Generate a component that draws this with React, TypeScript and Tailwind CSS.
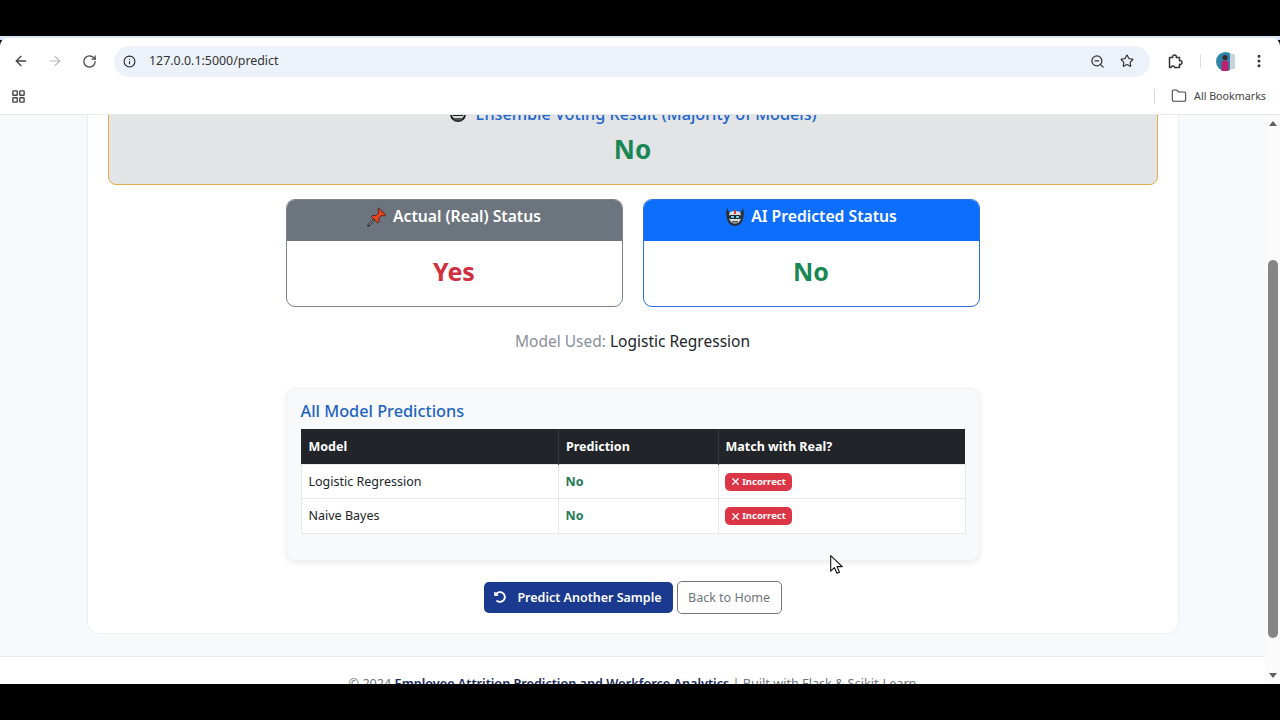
import { ArrowLeft, ArrowRight, Folder, Info, LayoutGrid, MoreVertical, RotateCw, Star, X, ZoomOut } from "lucide-react";
import { FaUndoAlt } from "react-icons/fa";

const MODELS = ["Logistic Regression", "Naive Bayes"];

function PinIcon() {
  return (
    <svg width="20" height="20" viewBox="0 0 20 20" className="shrink-0">
      <path d="M1.5 18.5 7 12.5" stroke="#222" strokeWidth="2.4" strokeLinecap="round" />
      <path d="M1.8 18.2 6.8 12.7" stroke="#ddd" strokeWidth="0.8" />
      <path d="M11.5 1 19 8l-1.6 1-2.6-.6-3 3 .4 3.3-1.4 1.3L4.2 9.8l1.4-1.4 3.3.3 2.7-3-.4-2.9z" fill="#e8431f" stroke="#3a1a10" strokeWidth="0.8" />
    </svg>
  );
}

function RobotIcon() {
  return (
    <svg width="20" height="20" viewBox="0 0 20 20" className="shrink-0">
      <path d="M2 1l2 4h12l2-4 1 5-1 6c-1 4-4 7-8 7s-7-3-8-7L1 6z" fill="#2b2f36" />
      <path d="M4.5 5.5c3-2 8-2 11 0l.5 6c-1 3-3 5-6 5s-5-2-6-5z" fill="#d9dce0" />
      <rect x="4" y="8" width="12" height="4" rx="1.5" fill="#1f2a33" />
      <rect x="6" y="9" width="3" height="2" fill="#6fd0e8" />
      <rect x="11" y="9" width="3" height="2" fill="#6fd0e8" />
      <rect x="9" y="3" width="2" height="4" fill="#d4402f" />
      <rect x="7" y="14" width="6" height="1.5" fill="#555" />
    </svg>
  );
}

function BallotIcon() {
  return (
    <svg width="16" height="18" viewBox="0 0 16 18" className="shrink-0">
      <circle cx="8" cy="9" r="7" fill="#d6d8da" stroke="#222" strokeWidth="2" />
      <rect x="3" y="9" width="10" height="2" fill="#222" />
      <path d="M4 13h8l-1 2.5H5z" fill="#555" />
    </svg>
  );
}

function ExtensionIcon() {
  return (
    <svg width="16" height="16" viewBox="0 0 16 16" fill="none" className="ml-[18px] shrink-0">
      <path
        d="M1.5 4.5h3.2a1.9 1.9 0 1 1 3.6 0h3.2v3.2a1.9 1.9 0 1 1 0 3.6v3.2H6.7a1.9 1.9 0 0 0-3.4-.6l-.3.6H1.5z"
        stroke="#333"
        strokeWidth="1.5"
        strokeLinejoin="round"
      />
    </svg>
  );
}

function Avatar() {
  return (
    <svg width="19" height="19" viewBox="0 0 19 19" className="shrink-0">
      <circle cx="9.5" cy="9.5" r="9.5" fill="#2f86a8" />
      <path d="M14 2h5v15h-5z" fill="#c7d4dc" />
      <circle cx="9" cy="5.5" r="2.6" fill="#3a2a2a" />
      <path d="M5.5 19V10c0-2 7-2 7 0v9z" fill="#b8226e" />
    </svg>
  );
}

function Cursor() {
  return (
    <svg width="13" height="19" viewBox="0 0 13 19" className="absolute left-[830px] top-[555px]">
      <path d="M.7.7v15.4l3.7-3.5 2.5 5.7 2.6-1.1-2.5-5.6h5.2z" fill="#fff" stroke="#111" strokeWidth="1.1" strokeLinejoin="round" />
    </svg>
  );
}

function StatusCard({ title, icon, value, head, border, valueColor }: {
  title: string;
  icon: React.ReactNode;
  value: string;
  head: string;
  border: string;
  valueColor: string;
}) {
  return (
    <div className={`w-[337px] h-[108px] rounded-[9px] border bg-white overflow-hidden ${border}`}>
      <div className={`h-[41px] pb-[7px] flex items-center justify-center gap-[6px] text-white text-[15.7px] font-semibold ${head}`}>
        {icon}
        <span>{title}</span>
      </div>
      <div className={`h-[65px] pb-[4px] flex items-center justify-center text-[25px] font-bold ${valueColor}`}>{value}</div>
    </div>
  );
}

export default function App() {
  return (
    <div className="relative w-[1280px] h-[720px] overflow-hidden bg-black flex flex-col font-['Noto_Sans','Open_Sans',sans-serif] text-[#212529]">
      <div className="h-[36px] shrink-0 bg-black" />
      <div className="h-[4px] shrink-0 bg-[#d9e6f7]" />

      {/* browser toolbar */}
      <div className="h-[44px] shrink-0 bg-white flex items-center rounded-t-[8px] -mt-[2px] pt-[2px]">
        <ArrowLeft className="ml-[13px] text-[#444]" size={16} strokeWidth={2} />
        <ArrowRight className="ml-[18px] text-[#b5b8bc]" size={16} strokeWidth={1.8} />
        <RotateCw className="ml-[19px] text-[#444]" size={15} strokeWidth={2} />
        <div className="ml-[17px] w-[1036px] h-[31px] rounded-full bg-[#edf2fa] flex items-center">
          <Info className="ml-[9px] text-[#222]" size={13} strokeWidth={2} />
          <span className="ml-[13px] text-[12.4px] text-[#333]">127.0.0.1:5000/predict</span>
          <ZoomOut className="ml-auto text-[#333]" size={15} strokeWidth={2} />
          <Star className="ml-[15px] mr-[16px] text-[#333]" size={14} strokeWidth={2} />
        </div>
        <ExtensionIcon />
        <div className="ml-[16px] w-px h-[14px] bg-[#dde1e6]" />
        <div className="ml-[15px]"><Avatar /></div>
        <MoreVertical className="ml-[16px] text-[#333]" size={16} strokeWidth={2.5} />
      </div>

      {/* bookmarks bar */}
      <div className="h-[33px] shrink-0 bg-white flex items-center pb-[4px] border-b border-[#e6e8eb]">
        <LayoutGrid className="ml-[11px] text-[#444]" size={15} strokeWidth={2.2} />
        <div className="ml-auto w-px h-[15px] bg-[#d5d9de]" />
        <Folder className="ml-[16px] text-[#444]" size={16} strokeWidth={1.6} />
        <span className="ml-[7px] mr-[14px] text-[10.7px] text-[#444]">All Bookmarks</span>
      </div>

      {/* page viewport */}
      <div className="h-[569px] shrink-0 flex overflow-hidden bg-white">
        <div className="w-[1265px] shrink-0 bg-[#f8f9fa]">
          <div className="w-[1092px] mx-auto -mt-[40px] bg-white rounded-[12px] border border-[#eceef0] px-[20px] pt-[20px] pb-[19px]">
            <div className="h-[89px] rounded-[8px] border border-[#e5ac4f] bg-[#e2e4e6] pt-[7px] text-center">
              <div className="h-[20px] flex items-center justify-center gap-[9px] pl-[2px] text-[16.2px] leading-[20px] font-medium text-[#1d64c8]">
                <BallotIcon />
                <span>Ensemble Voting Result (Majority of Models)</span>
              </div>
              <div className="mt-[7px] text-[26px] leading-[36px] font-bold text-[#198754]">No</div>
            </div>

            <div className="mt-[14px] flex justify-center gap-[20px]">
              <StatusCard title="Actual (Real) Status" icon={<PinIcon />} value="Yes" head="bg-[#6c757d]" border="border-[#7d858c]" valueColor="text-[#d0303f]" />
              <StatusCard title="AI Predicted Status" icon={<RobotIcon />} value="No" head="bg-[#0d6efd]" border="border-[#2d72d9]" valueColor="text-[#198754]" />
            </div>

            <p className="mt-[22px] text-center text-[15.5px] leading-[24px] text-[#8a9097]">
              Model Used: <span className="text-[#212529]">Logistic Regression</span>
            </p>

            <div className="mt-[35px] mx-auto w-[694px] h-[173px] rounded-[10px] bg-[#f8f9fa] border border-[#f0f1f3] shadow-[0_2px_6px_rgba(0,0,0,0.08)] px-[14px] pt-[10px]">
              <h3 className="text-[16.3px] leading-[24px] font-medium text-[#1d64c0]">All Model Predictions</h3>
              <table className="mt-[6px] w-[664px] table-fixed border-collapse text-[12.5px]">
                <colgroup>
                  <col className="w-[257px]" />
                  <col className="w-[160px]" />
                  <col className="w-[247px]" />
                </colgroup>
                <thead>
                  <tr className="h-[35px] bg-[#212529] text-white text-left font-bold">
                    <th className="px-[7.5px] pt-[2px] border-r border-[#32383e]">Model</th>
                    <th className="px-[7.5px] pt-[2px] border-r border-[#32383e]">Prediction</th>
                    <th className="px-[7px] pt-[2px]">Match with Real?</th>
                  </tr>
                </thead>
                <tbody className="bg-white">
                  {MODELS.map((m) => (
                    <tr key={m} className="h-[34.5px] border border-[#e6e8ea]">
                      <td className="px-[7px] pt-[2px] border-r border-[#e6e8ea]">{m}</td>
                      <td className="px-[7px] pt-[2px] border-r border-[#e6e8ea] font-bold text-[#1c7a55]">No</td>
                      <td className="px-[6px] pt-[3px]">
                        <span className="inline-flex items-center gap-[1px] h-[18px] w-[67px] justify-center rounded-[5px] bg-[#dc3545] text-white text-[9.5px] font-bold">
                          <X size={11} strokeWidth={3} />
                          Incorrect
                        </span>
                      </td>
                    </tr>
                  ))}
                </tbody>
              </table>
            </div>

            <div className="mt-[20px] flex justify-center items-center gap-[4px]">
              <button className="w-[189px] h-[31px] rounded-[5px] bg-[#1a3a8f] text-white text-[12.5px] font-semibold flex items-center justify-center gap-[11px]">
                <FaUndoAlt size={12} className="-mt-[2px]" />
                <span className="pt-[2px]">Predict Another Sample</span>
              </button>
              <button className="w-[105px] h-[33px] pt-[2px] rounded-[5px] border border-[#777] bg-white text-[#6c757d] text-[12.5px]">Back to Home</button>
            </div>
          </div>

          <footer className="mt-[22px] bg-white border-t border-[#e6e8ea] pt-[16px] text-center text-[12.65px] leading-[20px] text-[#6c757d]">
            © 2024 <span className="font-semibold text-[#1a2b5a]">Employee Attrition Prediction and Workforce Analytics</span> | Built with Flask &amp; Scikit-Learn
          </footer>
        </div>

        {/* scrollbar */}
        <div className="w-[15px] shrink-0 bg-[#fbfbfb] flex flex-col items-center">
          <span className="mt-[6px] w-0 h-0 border-x-[4px] border-x-transparent border-b-[5px] border-b-[#606060]" />
          <div className="mt-[134px] w-[10px] h-[378px] rounded-full bg-[#858585]" />
          <span className="mt-[35px] w-0 h-0 border-x-[4px] border-x-transparent border-t-[5px] border-t-[#606060]" />
        </div>
      </div>

      <div className="flex-1 bg-black" />
      <Cursor />
    </div>
  );
}
